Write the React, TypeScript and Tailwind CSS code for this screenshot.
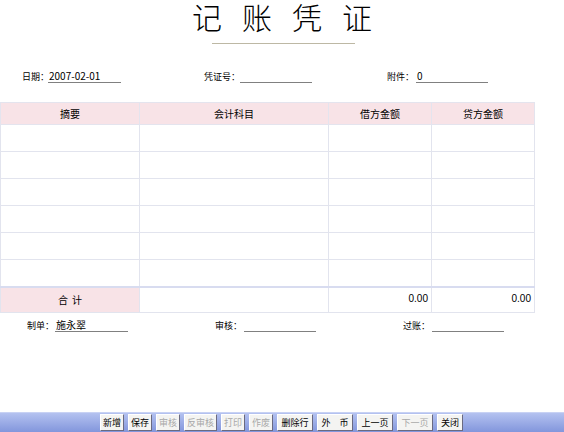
import React from "react";

const font = { fontFamily: '"Noto Sans CJK SC", "Liberation Sans", sans-serif' };

function Field({ label, value, labelW, lineW }: { label: string; value?: string; labelW: string; lineW: string }) {
  return (
    <div className="flex items-end whitespace-nowrap">
      <span className={`${labelW} shrink-0 text-[9px] leading-[12px] text-black whitespace-nowrap`}>{label}</span>
      <span className={`${lineW} shrink-0 h-[13px] border-b border-[#808080] text-[10px] leading-[12px] pl-[1px] text-black whitespace-nowrap`}>{value}</span>
    </div>
  );
}

function Btn({ label, disabled, w }: { label: string; disabled?: boolean; w: string }) {
  return (
    <div
      className={`${w} h-[17px] flex items-center justify-center whitespace-nowrap bg-[#f4f4f2] border-t border-l border-white border-r border-b border-r-[#6a6a80] border-b-[#6a6a80] text-[9px] leading-none ${
        disabled ? "text-[#a8a8a8]" : "text-black"
      }`}
    >
      {label}
    </div>
  );
}

export default function App() {
  const rows = [0, 1, 2, 3, 4, 5];
  const num = { fontFamily: '"Liberation Sans", sans-serif' };
  return (
    <div className="w-[564px] h-[432px] bg-white flex flex-col overflow-hidden" style={font}>
      {/* title */}
      <div className="flex flex-col items-center">
        <div className="h-[38px] text-[30px] leading-[33px] tracking-[20px] pl-[20px] text-black font-light whitespace-nowrap">记账凭证</div>
        <div className="mt-[5px] w-[143px] h-px bg-[#bdb8a4] ml-[2px]"></div>
      </div>

      {/* info row */}
      <div className="flex mt-[26px] pl-[22px] h-[16px]">
        <div className="w-[182px]">
          <Field label="日期：" value="2007-02-01" labelW="w-[26px]" lineW="w-[73px]" />
        </div>
        <div className="w-[183px]">
          <Field label="凭证号：" labelW="w-[36px]" lineW="w-[72px]" />
        </div>
        <div>
          <Field label="附件：" value="0" labelW="w-[29px]" lineW="w-[72px]" />
        </div>
      </div>

      {/* table */}
      <div className="mt-[16px] w-[534px]">
        <table className="border-collapse w-[534px] table-fixed text-[10px] text-black">
          <colgroup>
            <col className="w-[139px]" />
            <col className="w-[189px]" />
            <col className="w-[103px]" />
            <col className="w-[103px]" />
          </colgroup>
          <thead>
            <tr className="h-[22px] bg-[#f8e3e7]">
              <th className="font-normal border border-[#e4e4ee]">摘要</th>
              <th className="font-normal border border-[#e4e4ee]">会计科目</th>
              <th className="font-normal border border-[#e4e4ee]">借方金额</th>
              <th className="font-normal border border-[#e4e4ee]">贷方金额</th>
            </tr>
          </thead>
          <tbody>
            {rows.map((r) => (
              <tr key={r} className="h-[27px]">
                <td className="border border-[#e2e4ee]"></td>
                <td className="border border-[#e2e4ee]"></td>
                <td className="border border-[#e2e4ee]"></td>
                <td className="border border-[#e2e4ee]"></td>
              </tr>
            ))}
            <tr className="h-[26px]">
              <td className="bg-[#f8e3e7] text-center border border-[#e2e4ee] border-t-2 border-t-[#d8dcf0] tracking-[4px] pl-[4px]">合计</td>
              <td className="border border-[#e2e4ee] border-t-2 border-t-[#d8dcf0]"></td>
              <td className="border border-[#e2e4ee] border-t-2 border-t-[#d8dcf0] text-right align-top pt-[3px] pr-[3px] text-[10px]" style={num}>0.00</td>
              <td className="border border-[#e2e4ee] border-t-2 border-t-[#d8dcf0] text-right align-top pt-[3px] pr-[3px] text-[10px]" style={num}>0.00</td>
            </tr>
          </tbody>
        </table>
      </div>

      {/* footer row */}
      <div className="flex mt-[6px] pl-[27px] h-[16px]">
        <div className="w-[188px]">
          <Field label="制单：" value="施永翠" labelW="w-[28px]" lineW="w-[73px]" />
        </div>
        <div className="w-[188px]">
          <Field label="审核：" labelW="w-[29px]" lineW="w-[72px]" />
        </div>
        <div>
          <Field label="过账：" labelW="w-[29px]" lineW="w-[72px]" />
        </div>
      </div>

      <div className="flex-1"></div>

      {/* bottom bar */}
      <div className="h-[20px] bg-gradient-to-b from-[#b4c2f0] to-[#8396dc] border-t border-[#c8d2f4] flex items-center pl-[100px] gap-[4px]">
        <Btn label="新增" w="w-[24px]" />
        <Btn label="保存" w="w-[24px]" />
        <Btn label="审核" w="w-[24px]" disabled />
        <Btn label="反审核" w="w-[33px]" disabled />
        <Btn label="打印" w="w-[24px]" disabled />
        <Btn label="作废" w="w-[24px]" disabled />
        <Btn label="删除行" w="w-[36px]" />
        <Btn label="外　币" w="w-[36px]" />
        <Btn label="上一页" w="w-[36px]" />
        <Btn label="下一页" w="w-[36px]" disabled />
        <Btn label="关闭" w="w-[26px]" />
      </div>
    </div>
  );
}
